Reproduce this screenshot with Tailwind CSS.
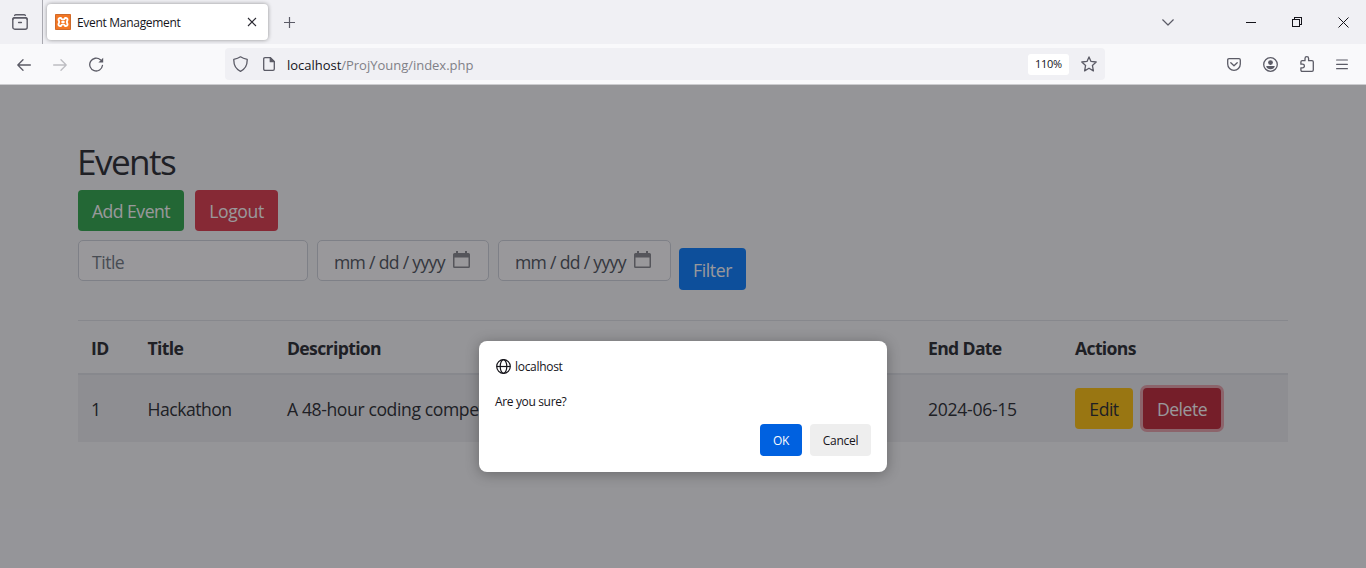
<!DOCTYPE html>
<html lang="en">
<head>
<meta charset="utf-8">
<title>Event Management</title>
<script src="https://cdn.jsdelivr.net/npm/@tailwindcss/browser@4"></script>
</head>
<body class="flex h-[568px] w-[1366px] flex-col overflow-hidden bg-[#f8f9fa] font-['Open_Sans','Noto_Sans',sans-serif] text-[#15141a]">

<!-- Tab strip -->
<div class="flex h-11 shrink-0 items-start bg-[#f0f0f4]">
  <div class="flex h-11 w-[43px] items-center border-r border-[#a9a9b0] pl-3">
    <svg class="size-4" viewBox="0 0 16 16" fill="none" stroke="#5b5b66" stroke-width="1.4" stroke-linecap="round"><path d="M2.6 1.5 Q3 .8 4 .8 H12 Q13 .8 13.4 1.5"/><rect x=".8" y="3.8" width="14.4" height="11.4" rx="2"/><path d="M.8 5.4 Q1 3.8 2.8 3.8 H13.2 Q15 3.8 15.2 5.4M6.6 8.5 H9.4"/></svg>
  </div>
  <div class="mt-1 ml-1 flex h-9 w-[221px] items-center rounded bg-white pr-[11px] pl-2 shadow-[0_0_4px_rgba(0,0,0,0.4)]">
    <svg class="size-4" viewBox="0 0 16 16"><rect width="16" height="16" rx="1" fill="#f37623"/><rect x=".5" y=".5" width="15" height="15" rx=".8" fill="none" stroke="#cc6a2c"/><path d="M5 4 H5.8 Q6.6 5.6 8 5.6 Q9.4 5.6 10.2 4 H11 A1.6 1.6 0 0 1 12.2 6.6 Q11.4 8 12.2 9.4 A1.6 1.6 0 0 1 11 12 H10.2 Q9.4 10.4 8 10.4 Q6.6 10.4 5.8 12 H5 A1.6 1.6 0 0 1 3.8 9.4 Q4.6 8 3.8 6.6 A1.6 1.6 0 0 1 5 4 Z M6.4 8 H9.6" fill="none" stroke="#fff" stroke-width="1.9"/></svg>
    <span class="ml-[6px] pt-[2px] text-[12px] tracking-[-0.3px] whitespace-nowrap">Event Management</span>
    <svg class="ml-auto size-[10px]" viewBox="0 0 10 10" stroke="#2b2a33" stroke-width="1.1" fill="none"><path d="M1 1 L9 9 M9 1 L1 9"/></svg>
  </div>
  <svg class="mt-[17px] ml-4 size-3" viewBox="0 0 12 12" stroke="#5b5b66" stroke-width="1.2"><path d="M5.5 0 V11 M0 5.5 H11"/></svg>
  <div class="mr-[17px] ml-auto flex h-11 items-center">
    <svg class="mr-[72px] h-[7px] w-3" viewBox="0 0 12 7" fill="none" stroke="#5b5b66" stroke-width="1.2" stroke-linecap="round" stroke-linejoin="round"><path d="M.7 .8 L6 6 L11.3 .8"/></svg>
    <svg class="mr-9 h-px w-[10px]" viewBox="0 0 10 1"><rect width="10" height="1" fill="#15141a"/></svg>
    <svg class="mr-9 size-[10px]" viewBox="0 0 10 10" fill="none" stroke="#15141a" shape-rendering="crispEdges"><path d="M.5 2.5 H7.5 V9.5 H.5 Z M2.5 2.5 V.5 H9.5 V7.5 H7.5"/></svg>
    <svg class="size-[11px]" viewBox="0 0 11 11" stroke="#15141a" stroke-width="1"><path d="M.5 .5 L10.5 10.5 M10.5 .5 L.5 10.5"/></svg>
  </div>
</div>

<!-- Navigation toolbar -->
<div class="flex h-[41px] shrink-0 items-start border-b border-[#cccccf] bg-[#f9f9fb]">
  <div class="flex h-[41px] w-[225px] items-center pl-[17px]">
    <svg class="h-3 w-[14px]" viewBox="0 0 14 12" fill="none" stroke="#5b5b66" stroke-width="1.3" stroke-linecap="round" stroke-linejoin="round"><path d="M13.4 6 H.8 M6 .8 L.8 6 L6 11.2"/></svg>
    <svg class="ml-[22px] h-3 w-[14px]" viewBox="0 0 14 12" fill="none" stroke="#bdbdc2" stroke-width="1.3" stroke-linecap="round" stroke-linejoin="round"><path d="M.6 6 H13.2 M8 .8 L13.2 6 L8 11.2"/></svg>
    <svg class="ml-[22px] size-[15px]" viewBox="0 0 15 15" fill="none" stroke="#5b5b66" stroke-width="1.3" stroke-linecap="round"><path d="M13.5 8.3 A6.4 6.4 0 1 1 11.4 2.8"/><path d="M14.2 .8 V5.6 H9.4 Z" fill="#5b5b66" stroke="none"/></svg>
  </div>
  <div class="mt-1 flex h-8 w-[880px] items-center rounded bg-[#f0f0f4] pr-2 pl-2">
    <svg class="h-4 w-[15px]" viewBox="0 0 15 16" fill="none" stroke="#5b5b66" stroke-width="1.3" stroke-linejoin="round"><path d="M7.5 .8 Q10 2.6 14.2 3.3 C14.4 9 12.5 13 7.5 15.3 C2.5 13 .6 9 .8 3.3 Q5 2.6 7.5 .8Z"/></svg>
    <svg class="ml-[15px] h-[14px] w-3" viewBox="0 0 12 14" fill="none" stroke="#5b5b66" stroke-width="1.3" stroke-linejoin="round"><path d="M2 .7 H7.3 L11.3 4.7 V12 Q11.3 13.3 10 13.3 H2 Q.7 13.3 .7 12 V2 Q.7 .7 2 .7Z"/><path d="M7.3 .7 V4.7 H11.3 Z" fill="#5b5b66"/></svg>
    <span class="ml-3 pt-[3px] text-[13px] tracking-[-0.02px] whitespace-nowrap text-[#808087]"><span class="text-[#15141a]">localhost</span>/ProjYoung/index.php</span>
    <span class="ml-auto flex h-[21px] w-[41px] items-center justify-center rounded-[3px] bg-white pt-px text-[11px] tracking-[-0.3px]">110%</span>
    <svg class="ml-3 size-4" viewBox="0 0 16 16" fill="none" stroke="#5b5b66" stroke-width="1.3" stroke-linejoin="round"><path d="M8 .9 L10 5.4 L15.2 6 L11.4 9.4 L12.4 14.9 L8 12.2 L3.6 14.9 L4.6 9.4 L.8 6 L6 5.4 Z"/></svg>
  </div>
  <div class="mr-[18px] ml-auto flex h-10 items-center">
    <svg class="h-[13px] w-[14px]" viewBox="0 0 14 13" fill="none" stroke="#5b5b66" stroke-width="1.3" stroke-linecap="round" stroke-linejoin="round"><path d="M2 .7 H12 Q13.3 .7 13.3 2 V6 A6.3 6.3 0 0 1 .7 6 V2 Q.7 .7 2 .7Z M3.8 4.7 L7 7.7 L10.2 4.7"/></svg>
    <svg class="ml-[22px] size-[15px]" viewBox="0 0 15 15"><circle cx="7.5" cy="7.5" r="6.8" fill="none" stroke="#5b5b66" stroke-width="1.3"/><circle cx="7.5" cy="5.6" r="2.4" fill="#5b5b66"/><path d="M3.2 9 H11.8 Q11 12.2 7.5 12.2 Q4 12.2 3.2 9Z" fill="#5b5b66"/></svg>
    <svg class="ml-[22px] h-4 w-[14px]" viewBox="0 0 14 16" fill="none" stroke="#5b5b66" stroke-width="1.3" stroke-linejoin="round"><path d="M5 4.7 V2.5 A1.8 1.8 0 0 1 8.6 2.5 V4.7 H12 Q13.3 4.7 13.3 6 V14 Q13.3 15.3 12 15.3 H2.2 Q.9 15.3 .9 14 V11.8 H2.6 A1.7 1.7 0 0 0 2.6 8.2 H.9 V6 Q.9 4.7 2.2 4.7 Z"/></svg>
    <svg class="ml-[22px] h-[11px] w-3" viewBox="0 0 12 11" stroke="#5b5b66" stroke-width="1.2" stroke-linecap="round"><path d="M.6 1 H11.4 M.6 5.3 H11.4 M.6 9.7 H11.4"/></svg>
  </div>
</div>

<!-- Page -->
<main class="relative h-[483px] shrink-0 text-[17.6px] text-[#212529]">
  <div class="ml-[78px] w-[1210px] pt-[55px]">
    <h2 class="-ml-px h-[50px] text-[35.2px] leading-[42px] tracking-[-1.6px]">Events</h2>
    <div class="flex gap-[11px] text-white">
      <button class="h-[41px] w-[106px] rounded-[4px] bg-[#28a745] pt-[2px] tracking-[-0.5px]">Add Event</button>
      <button class="h-[41px] w-[83px] rounded-[4px] bg-[#dc3545] pt-[2px] tracking-[-0.4px]">Logout</button>
    </div>
    <div class="mt-[9px] flex items-start gap-[9px]">
      <div class="flex h-[41px] w-[230px] items-center rounded-[5px] border border-[#ced4da] bg-white pt-[3px] pl-[13px] tracking-[-0.5px] text-[#6c757d]">Title</div>
      <div class="flex h-[41px] w-[172px] items-center rounded-[5px] border border-[#ced4da] bg-white pl-4 text-[#495057]"><span class="w-[119px] pt-[3px] tracking-[-0.7px] whitespace-nowrap">mm / dd / yyyy</span><svg class="mb-[2px] h-[17px] w-[17px]" viewBox="0 0 17 17"><path d="M3 0 H5 V2 H12 V0 H14 V2 H15.5 Q17 2 17 3.5 V15.5 Q17 17 15.5 17 H1.5 Q0 17 0 15.5 V3.5 Q0 2 1.5 2 H3 Z M1.5 6.5 V15.5 H15.5 V6.5 Z" fill="#83868a" fill-rule="evenodd"/></svg></div>
      <div class="flex h-[41px] w-[173px] items-center rounded-[5px] border border-[#ced4da] bg-white pl-4 text-[#495057]"><span class="w-[119px] pt-[3px] tracking-[-0.7px] whitespace-nowrap">mm / dd / yyyy</span><svg class="mb-[2px] h-[17px] w-[17px]" viewBox="0 0 17 17"><path d="M3 0 H5 V2 H12 V0 H14 V2 H15.5 Q17 2 17 3.5 V15.5 Q17 17 15.5 17 H1.5 Q0 17 0 15.5 V3.5 Q0 2 1.5 2 H3 Z M1.5 6.5 V15.5 H15.5 V6.5 Z" fill="#83868a" fill-rule="evenodd"/></svg></div>
      <button class="mt-2 -ml-px h-[42px] w-[67px] rounded-[4px] bg-[#007bff] pt-[2px] tracking-[-0.4px] text-white">Filter</button>
    </div>
    <table class="mt-[30px] w-[1210px] table-fixed border-collapse text-left">
      <colgroup><col class="w-[56px]"><col class="w-[140px]"><col class="w-[441px]"><col class="w-[200px]"><col class="w-[147px]"><col></colgroup>
      <thead>
        <tr class="h-[53px] border-t border-b-2 border-[#dee2e6] tracking-[-0.65px]">
          <th class="pt-[2px] pl-[13px]">ID</th><th class="pt-[2px] pl-[13.5px]">Title</th><th class="pt-[2px] pl-[13px]">Description</th><th class="pt-[2px] pl-[13px]">Start Date</th><th class="pt-[2px] pl-[13px]">End Date</th><th class="pt-[2px] pl-[13px]">Actions</th>
        </tr>
      </thead>
      <tbody>
        <tr class="h-[68px] bg-[#ecedee] tracking-[-0.5px] whitespace-nowrap">
          <td class="pt-[2px] pl-[13px]">1</td><td class="pt-[2px] pl-[13.5px]">Hackathon</td><td class="pt-[2px] pl-[13px] tracking-[-0.4px]">A 48-hour coding competition.</td><td class="pt-[2px] pl-[13px]">2024-06-14</td><td class="pt-[2px] pl-[13px] tracking-[-0.3px]">2024-06-15</td>
          <td class="pl-[13px]"><div class="flex gap-[10px]"><button class="h-[41px] w-[58px] rounded-[4px] bg-[#ffc107] pt-[2px]">Edit</button><button class="h-[41px] w-[78px] rounded-[4px] bg-[#bd2130] pt-[2px] text-white shadow-[0_0_0_3px_rgba(225,83,97,0.5)]">Delete</button></div></td>
        </tr>
      </tbody>
    </table>
  </div>

  <!-- Modal backdrop and confirmation dialog -->
  <div class="absolute inset-0 bg-[rgba(28,27,34,0.45)]"></div>
  <div class="absolute top-[256px] left-[479px] flex h-[131px] w-[408px] flex-col rounded-lg bg-white px-4 pt-4 pb-4 text-[12px] text-[#15141a] shadow-[0_2px_14px_rgba(0,0,0,0.3)]">
    <div class="flex h-[18px] items-center">
      <svg class="ml-px size-[15px]" viewBox="0 0 15 15" fill="none" stroke="#15141a" stroke-width="1.2"><circle cx="7.5" cy="7.5" r="6.8"/><ellipse cx="7.5" cy="7.5" rx="3.3" ry="6.8"/><path d="M.7 7.5 H14.3"/></svg>
      <span class="ml-1 pt-px font-medium tracking-[-0.3px]">localhost</span>
    </div>
    <p class="mt-[18px] h-[18px] leading-[18px] tracking-[-0.35px]">Are you sure?</p>
    <div class="mt-auto flex justify-end gap-2 font-medium tracking-[-0.3px]">
      <button class="h-8 w-[42px] rounded bg-[#0061e0] pt-[2px] text-[#fbfbfe]">OK</button>
      <button class="h-8 w-[61px] rounded bg-[#eeeeee] pt-[2px]">Cancel</button>
    </div>
  </div>
</main>
</body>
</html>
